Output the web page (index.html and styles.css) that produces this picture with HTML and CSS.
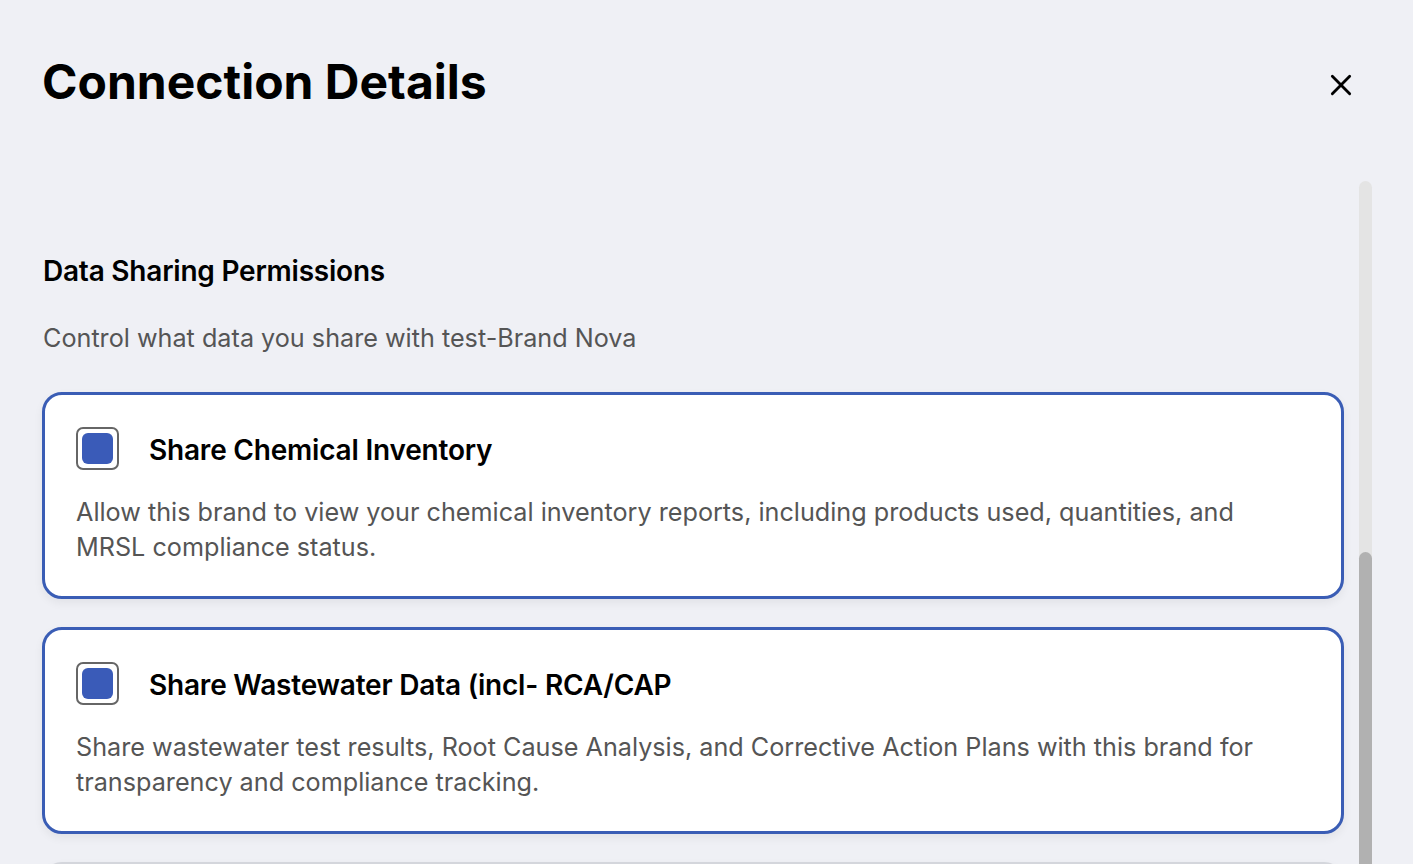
FILE: index.html
```html
<!DOCTYPE html>
<html lang="en">
<head>
<meta charset="utf-8">
<title>Connection Details</title>
<link rel="stylesheet" href="styles.css">
</head>
<body>
<div class="modal">
  <header class="modal-header">
    <h1 class="modal-title">Connection Details</h1>
    <button class="close-btn" aria-label="Close">
      <svg width="26" height="26" viewBox="0 0 24 24" fill="none" stroke="#000" stroke-width="2.6" stroke-linecap="round">
        <path d="M4 4 L20 20 M20 4 L4 20"/>
      </svg>
    </button>
  </header>
  <div class="modal-body">
    <div class="content">
      <h2 class="section-title">Data Sharing Permissions</h2>
      <p class="section-sub">Control what data you share with test-Brand Nova</p>
      <div class="cards">
        <div class="card card-active">
          <div class="card-head">
            <span class="checkbox checked"><span class="check-fill"></span></span>
            <span class="card-title">Share Chemical Inventory</span>
          </div>
          <p class="card-desc">Allow this brand to view your chemical inventory reports, including products used, quantities, and MRSL compliance status.</p>
        </div>
        <div class="card card-active">
          <div class="card-head">
            <span class="checkbox checked"><span class="check-fill"></span></span>
            <span class="card-title">Share Wastewater Data (incl- RCA/CAP</span>
          </div>
          <p class="card-desc">Share wastewater test results, Root Cause Analysis, and Corrective Action Plans with this brand for transparency and compliance tracking.</p>
        </div>
        <div class="card card-idle">
          <div class="card-head">
            <span class="checkbox"></span>
            <span class="card-title">Share Audit Reports</span>
          </div>
          <p class="card-desc">Allow this brand to view your audit reports and certifications.</p>
        </div>
      </div>
    </div>
    <div class="scroll-track"><div class="scroll-thumb"></div></div>
  </div>
</div>
</body>
</html>
```
FILE: styles.css
```css
* { box-sizing: border-box; }
html, body {
  margin: 0;
  height: 864px;
  overflow: hidden;
}
body {
  background: #eff0f5;
  font-family: Inter, "Noto Sans", "Liberation Sans", sans-serif;
  color: #000;
}
.modal {
  display: flex;
  flex-direction: column;
  height: 864px;
}
.modal-header {
  display: flex;
  justify-content: space-between;
  align-items: center;
  padding: 52px 57px 0 42px;
}
.modal-title {
  margin: 0;
  font-size: 48px;
  font-weight: 700;
  letter-spacing: 0;
  line-height: 60px;
}
.close-btn {
  border: 0;
  background: transparent;
  padding: 0;
  margin-top: 6px;
  width: 30px;
  height: 30px;
  display: flex;
  align-items: center;
  justify-content: center;
}
.modal-body {
  display: flex;
  gap: 15px;
  padding: 69px 41px 0 42px;
  flex: 1;
  min-height: 0;
}
.content {
  flex: 1;
  padding-top: 72px;
}
.section-title {
  margin: 0 0 0 1px;
  font-size: 28px;
  font-weight: 600;
  letter-spacing: -0.22px;
  line-height: 36px;
}
.section-sub {
  margin: 33px 0 0 1px;
  font-size: 25.2px;
  line-height: 32px;
  color: #555;
}
.cards {
  margin-top: 38px;
  display: flex;
  flex-direction: column;
  gap: 28px;
}
.card {
  background: #fff;
  border-radius: 20px;
  padding: 32px 40px 31px 31px;
  box-shadow: 0 4px 10px rgba(0,0,0,0.06);
}
.card-active { border: 3px solid #3a5db5; }
.card-idle { border: 2px solid #d4d6dc; }
.card-head {
  display: flex;
  align-items: center;
  gap: 30px;
}
.checkbox {
  width: 43px;
  height: 43px;
  border: 2px solid #666;
  border-radius: 7px;
  display: flex;
  align-items: center;
  justify-content: center;
  flex: none;
  background: #fff;
}
.check-fill {
  width: 31px;
  height: 31px;
  border-radius: 6px;
  background: #3a5bb8;
}
.card-title {
  font-size: 28px;
  font-weight: 600;
  letter-spacing: -0.2px;
  position: relative;
  top: 1px;
}
.card-desc {
  margin: 25px 0 0;
  font-size: 25.2px;
  line-height: 35px;
  color: #555;
}
.scroll-track {
  width: 13px;
  flex: none;
  background: #e4e4e4;
  border-radius: 7px;
  display: flex;
  flex-direction: column;
  margin-bottom: -20px;
}
.scroll-thumb {
  margin-top: 371px;
  flex: 1;
  background: #b1b1b1;
  border-radius: 7px;
}
```
